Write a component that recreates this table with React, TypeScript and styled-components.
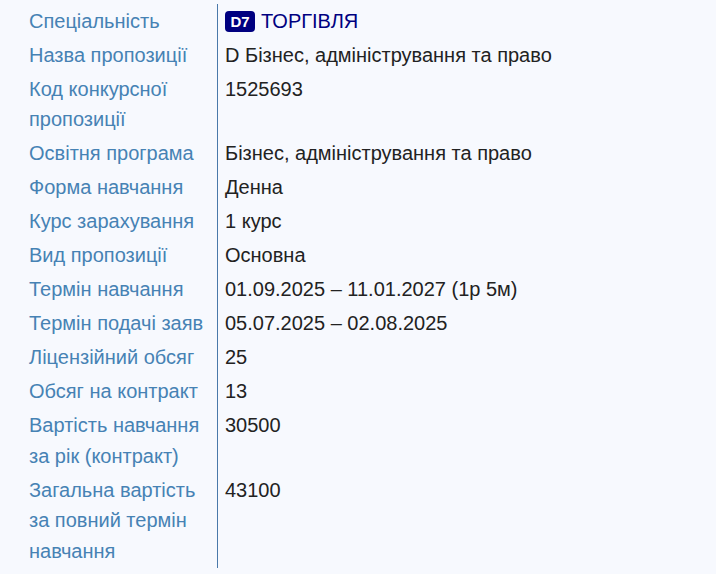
import styled, { createGlobalStyle } from 'styled-components';

type TRow = {
  label: string;
  value?: string;
  code?: string;
};

const rows: TRow[] = [
  { label: 'Спеціальність', code: 'D7', value: 'ТОРГІВЛЯ' },
  { label: 'Назва пропозиції', value: 'D Бізнес, адміністрування та право' },
  { label: 'Код конкурсної пропозиції', value: '1525693' },
  { label: 'Освітня програма', value: 'Бізнес, адміністрування та право' },
  { label: 'Форма навчання', value: 'Денна' },
  { label: 'Курс зарахування', value: '1 курс' },
  { label: 'Вид пропозиції', value: 'Основна' },
  { label: 'Термін навчання', value: '01.09.2025 – 11.01.2027 (1р 5м)' },
  { label: 'Термін подачі заяв', value: '05.07.2025 – 02.08.2025' },
  { label: 'Ліцензійний обсяг', value: '25' },
  { label: 'Обсяг на контракт', value: '13' },
  { label: 'Вартість навчання за рік (контракт)', value: '30500' },
  { label: 'Загальна вартість за повний термін навчання', value: '43100' },
];

const App = () => {
  return (
    <>
      <GlobalStyle />
      <Page>
        <Table>
          {rows.map(row => (
            <Row key={row.label}>
              <Label>{row.label}</Label>
              <Value>
                {row.code ? (
                  <>
                    <Badge>{row.code}</Badge>
                    <Speciality>{row.value}</Speciality>
                  </>
                ) : (
                  row.value
                )}
              </Value>
            </Row>
          ))}
        </Table>
      </Page>
    </>
  );
};

const GlobalStyle = createGlobalStyle`
  html, body {
    margin: 0;
    padding: 0;
    background: #f7f9fe;
  }
  body {
    font-family: 'Liberation Sans', Arial, sans-serif;
  }
`;

const Page = styled.div`
  min-height: 574px;
  padding: 4px 0 0 29px;
  box-sizing: border-box;
  background: #f7f9fe;
`;

const Table = styled.div`
  display: grid;
  grid-template-columns: 188px 1fr;
`;

const Row = styled.div`
  display: contents;
`;

const Label = styled.div`
  padding: 1.7px 6px 1.7px 0;
  color: #4682b4;
  font-size: 20px;
  line-height: 30.6px;
`;

const Value = styled.div`
  padding: 1.7px 0 1.7px 7px;
  border-left: 1px solid #4a79aa;
  color: #222222;
  font-size: 20px;
  line-height: 30.6px;
  display: flex;
  align-items: flex-start;
`;

const Badge = styled.span`
  display: inline-flex;
  align-items: center;
  justify-content: center;
  width: 30px;
  height: 21px;
  margin: 5px 6px 0 0;
  border-radius: 4px;
  background: #000080;
  color: #ffffff;
  font-size: 15px;
  font-weight: 700;
  line-height: 21px;
`;

const Speciality = styled.span`
  color: #000080;
`;

export default App;
